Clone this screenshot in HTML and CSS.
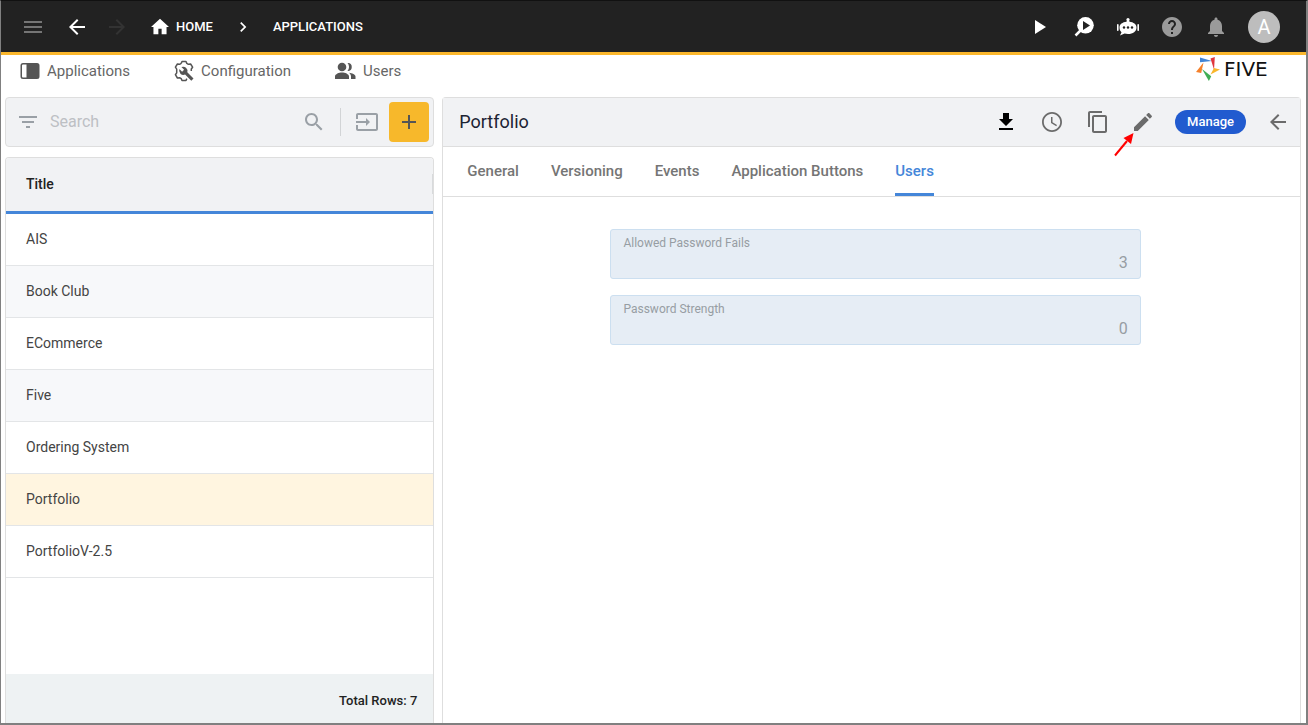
FILE: index.html
```html
<!DOCTYPE html>
<html lang="en">
<head>
<meta charset="utf-8">
<title>Five - Applications</title>
<link rel="stylesheet" href="styles.css">
</head>
<body>
<div class="app">
  <header class="topbar">
    <button class="icon-btn muted" aria-label="Menu"><svg width="24" height="24" viewBox="0 0 24 24"><path d="M3 18h18v-2H3v2zm0-5h18v-2H3v2zm0-7v2h18V6H3z"/></svg></button>
    <button class="icon-btn" aria-label="Back"><svg width="24" height="24" viewBox="0 0 24 24"><path d="M20 11H7.830l5.590-5.590L12 4l-8 8 8 8 1.410-1.410L7.830 13H20v-2z"/></svg></button>
    <button class="icon-btn narrow dim" aria-label="Forward"><svg width="24" height="24" viewBox="0 0 24 24"><path d="M12 4l-1.410 1.410L16.170 11H4v2h12.170l-5.580 5.590L12 20l8-8z"/></svg></button>
    <nav class="crumbs" aria-label="Breadcrumb">
      <a class="crumb" href="#"><svg width="18" height="18" viewBox="1 2 22 20"><path d="M10 21v-7h4v7h6v-9h3L12 2 1 12h3v9z"/></svg>HOME</a>
      <svg class="sep" width="20" height="20" viewBox="0 0 24 24"><path d="M10 6L8.590 7.410 13.170 12l-4.580 4.590L10 18l6-6z"/></svg>
      <a class="crumb" href="#">APPLICATIONS</a>
    </nav>
    <div class="top-actions">
      <button class="icon-btn" aria-label="Run"><svg width="24" height="24" viewBox="0 0 24 24"><path d="M7 5v14l11-7z"/></svg></button>
      <button class="icon-btn" aria-label="Inspect"><svg width="24" height="24" viewBox="0 0 24 24"><circle cx="13.500" cy="10.300" r="8.300"/><path d="M8.500 15.500l-5 5" stroke="#fff" stroke-width="2.500"/><path d="M11 6v9l7-4.500z" fill="#222"/></svg></button>
      <button class="icon-btn" aria-label="Assistant"><svg width="24" height="24" viewBox="0 0 24 24"><circle cx="12" cy="4.500" r="1.600"/><path d="M11.300 4h1.400l.800 2.700c4 .400 7 2.500 7 5.800 0 4-3.500 6.500-8.500 6.500-1.300 0-2.400-.100-3.400-.400L4 20.500l1.500-3.300C4.200 16 3.500 14.500 3.500 12.500c0-3.300 3-5.400 7-5.800z"/><rect x="1" y="9" width="1.600" height="7" rx=".800"/><rect x="21.400" y="9" width="1.600" height="7" rx=".800"/><circle cx="8" cy="12.500" r="1.200" fill="#222"/><circle cx="12" cy="12.500" r="1.200" fill="#222"/><circle cx="16" cy="12.500" r="1.200" fill="#222"/></svg></button>
      <button class="icon-btn gray" aria-label="Help"><svg width="24" height="24" viewBox="0 0 24 24"><path d="M12 2C6.480 2 2 6.480 2 12s4.480 10 10 10 10-4.480 10-10S17.520 2 12 2zm1 17h-2v-2h2v2zm2.070-7.750l-.900.920C13.450 12.900 13 13.500 13 15h-2v-.500c0-1.100.450-2.100 1.170-2.830l1.240-1.260c.370-.360.590-.860.590-1.410 0-1.100-.900-2-2-2s-2 .900-2 2H8c0-2.210 1.790-4 4-4s4 1.790 4 4c0 .880-.360 1.680-.930 2.250z"/></svg></button>
      <button class="icon-btn gray" aria-label="Notifications"><svg width="24" height="24" viewBox="0 0 24 24"><path d="M12 22c1.100 0 2-.900 2-2h-4c0 1.100.890 2 2 2zm6-6v-5c0-3.070-1.640-5.640-4.500-6.320V4c0-.830-.670-1.500-1.500-1.500s-1.500.670-1.500 1.500v.680C7.630 5.360 6 7.920 6 11v5l-2 2v1h16v-1l-2-2z"/></svg></button>
      <button class="avatar" aria-label="Account">A</button>
    </div>
  </header>

  <div class="subnav">
    <nav class="links" aria-label="Sections">
      <a href="#"><svg width="20" height="20" viewBox="0 0 20 20"><path fill-rule="evenodd" d="M3 2h14a2.500 2.500 0 0 1 2.500 2.500v11A2.500 2.500 0 0 1 17 18H3A2.500 2.500 0 0 1 .500 15.500v-11A2.500 2.500 0 0 1 3 2zm0 1.500a1 1 0 0 0-1 1v11a1 1 0 0 0 1 1h3.500v-13z"/></svg>Applications</a>
      <a href="#"><svg width="20" height="22" viewBox="1 0 20 22"><path fill="none" stroke="#555" stroke-width="1.500" stroke-linejoin="round" d="M8.200 3.400L9 1.500h4l.800 1.900 1.600.900 2.200-.300 2 3.200-1.300 1.800v1.900M8.200 3.400l-1.600.900-2.200-.300-2 3.200L3.700 9.100v3.800l-1.300 1.800 2 3.300 2.200-.300 1.600.900.800 1.900h4l.800-1.900"/><path d="M20.500 18.400l-6.200-6.200a4.300 4.300 0 0 0-5.900-5.100l2.700 2.700-2 2-2.700-2.700a4.300 4.300 0 0 0 5.700 5.500l6.200 6.200z"/></svg>Configuration</a>
      <a href="#"><svg width="21" height="22" viewBox="1 0 21 22"><circle cx="8" cy="7" r="4.300"/><path d="M14 3a4 4 0 1 1-.500 8 6 6 0 0 0 0-8zM1 19v-2.500C1 14 5 12.500 8 12.500s7 1.500 7 4V19zM15 12.700c3 .400 6.500 1.700 6.500 3.800V19H17v-2.500c0-1.600-.800-2.800-2-3.800z"/></svg>Users</a>
    </nav>
    <div class="brand">
      <svg width="24" height="24" viewBox="0 0 24 24"><path fill="#4285d6" d="M4 .500L16 4 4 5.200z"/><path fill="#e0363c" d="M14.500 1.500L18.800 0l-.800 12.500z"/><path fill="#f8b62b" d="M24 12.500L14.500 17.500 18 11z"/><path fill="#3fae55" d="M6 12l9.200 7.300-2.300 4.700z"/><path fill="#f5802a" d="M7.500 5.500L5.200 16 0 15z"/></svg>
      <span>FIVE</span>
    </div>
  </div>

  <main class="workspace">
    <section class="list-col">
      <div class="search">
        <svg width="24" height="24" viewBox="0 0 24 24"><path d="M10 18h4v-2h-4v2zM3 6v2h18V6H3zm3 7h12v-2H6v2z"/></svg>
        <input type="text" placeholder="Search" aria-label="Search">
        <button class="plain" aria-label="Find"><svg width="24" height="24" viewBox="0 0 24 24"><path d="M15.500 14h-.790l-.280-.270C15.410 12.590 16 11.110 16 9.500 16 5.910 13.090 3 9.500 3S3 5.910 3 9.500 5.910 16 9.500 16c1.610 0 3.090-.590 4.230-1.570l.270.280v.790l5 4.990L20.490 19l-4.990-5zm-6 0C7.010 14 5 11.990 5 9.500S7.010 5 9.500 5 14 7.010 14 9.500 11.990 14 9.500 14z"/></svg></button>
        <button class="plain import" aria-label="Import"><svg width="24" height="24" viewBox="0 0 24 24"><path d="M21 3.010H3c-1.100 0-2 .900-2 2V9h2V4.990h18v14.030H3V15H1v4.010c0 1.100.900 1.980 2 1.980h18c1.100 0 2-.880 2-1.980v-14c0-1.110-.900-2-2-2zM11 16l4-4-4-4v3H1v2h10v3z"/></svg></button>
        <button class="add" aria-label="Add"><svg width="24" height="24" viewBox="0 0 24 24"><path d="M19 13h-6v6h-2v-6H5v-2h6V5h2v6h6v2z"/></svg></button>
      </div>
      <div class="list">
        <table>
          <thead><tr><th scope="col"><span>Title</span></th></tr></thead>
          <tbody>
            <tr><td>AIS</td></tr>
            <tr><td>Book Club</td></tr>
            <tr><td>ECommerce</td></tr>
            <tr><td>Five</td></tr>
            <tr><td>Ordering System</td></tr>
            <tr class="selected"><td>Portfolio</td></tr>
            <tr><td>PortfolioV-2.5</td></tr>
          </tbody>
        </table>
        <footer class="total">Total Rows: 7</footer>
      </div>
    </section>

    <section class="detail">
      <div class="detail-head">
        <h1>Portfolio</h1>
        <button class="icon-btn wide black" aria-label="Download"><svg width="24" height="24" viewBox="0 0 24 24"><path d="M19 9h-4V3H9v6H5l7 7 7-7zM5 18v2h14v-2H5z"/></svg></button>
        <button class="icon-btn wide" aria-label="History"><svg width="24" height="24" viewBox="0 0 24 24"><path d="M11.990 2C6.470 2 2 6.480 2 12s4.470 10 9.990 10C17.520 22 22 17.520 22 12S17.520 2 11.990 2zM12 20.200c-4.500 0-8.200-3.700-8.200-8.200S7.500 3.800 12 3.800s8.200 3.700 8.200 8.200-3.700 8.200-8.200 8.200zM12.500 7H11v6l5.250 3.150.750-1.230-4.500-2.670z"/></svg></button>
        <button class="icon-btn wide" aria-label="Copy"><svg width="24" height="24" viewBox="0 0 24 24"><path d="M16 1H4c-1.100 0-2 .900-2 2v14h2V3h12V1zm3 4H8c-1.100 0-2 .900-2 2v14c0 1.100.900 2 2 2h11c1.100 0 2-.900 2-2V7c0-1.100-.900-2-2-2zm0 16H8V7h11v14z"/></svg></button>
        <button class="icon-btn edit" aria-label="Edit"><svg width="24" height="24" viewBox="0 0 24 24"><path d="M3 17.250V21h3.750L17.810 9.940l-3.750-3.750L3 17.250zM20.710 7.040c.390-.390.390-1.020 0-1.410l-2.340-2.340c-.390-.390-1.020-.390-1.410 0l-1.830 1.830 3.750 3.750 1.830-1.830z"/></svg>
          <svg class="pointer" width="22" height="26" viewBox="0 0 22 26"><path d="M2 24.500L14 10" stroke="#f00" stroke-width="2"/><path d="M20.500 2l-2.500 11-7.500-6z" fill="#f00"/></svg></button>
        <button class="manage">Manage</button>
        <button class="icon-btn" aria-label="Close"><svg width="24" height="24" viewBox="0 0 24 24"><path d="M20 11H7.830l5.590-5.590L12 4l-8 8 8 8 1.410-1.410L7.830 13H20v-2z"/></svg></button>
      </div>
      <div class="tabs" role="tablist">
        <button role="tab">General</button>
        <button role="tab">Versioning</button>
        <button role="tab">Events</button>
        <button role="tab">Application Buttons</button>
        <button role="tab" class="active" aria-selected="true">Users</button>
      </div>
      <form class="fields">
        <div class="field"><label for="fails">Allowed Password Fails</label><input id="fails" type="text" value="3" readonly></div>
        <div class="field"><label for="strength">Password Strength</label><input id="strength" type="text" value="0" readonly></div>
      </form>
    </section>
  </main>
</div>
</body>
</html>
```
FILE: styles.css
```css
* { box-sizing: border-box; }
body { margin: 0; background: #fff; color: #333; font: 14px/20px Roboto, "Liberation Sans", sans-serif; }
button, input { font: inherit; color: inherit; border: 0; padding: 0; margin: 0; background: none; }
button { cursor: pointer; }
a { color: inherit; text-decoration: none; }
svg { display: block; flex: none; fill: currentColor; }

.app { display: flex; flex-direction: column; min-height: 100vh; border: 1px solid #808080; border-width: 1px 2px 2px 1px; border-top-color: #111; }

.topbar { display: flex; align-items: center; height: 54px; padding: 1px 26px 0 10px; background: #222; border-bottom: 3px solid #fbb72c; color: #fff; }
.icon-btn { display: flex; align-items: center; justify-content: center; width: 44px; height: 44px; }
.icon-btn.narrow { width: 36px; }
.muted { color: #757575; }
.dim { color: #333; }
.gray { color: #9a9a9a; }
.crumbs { display: flex; align-items: center; margin-left: 16px; font-size: 13px; font-weight: 500; }
.crumb { display: flex; align-items: center; gap: 7px; }
.sep { margin: 0 20px; }
.top-actions { display: flex; align-items: center; margin-left: auto; }
.avatar { width: 32px; height: 32px; margin-left: 10px; border-radius: 50%; background: #bdbdbd; color: #fff; font-size: 20px; }

.subnav { display: flex; align-items: flex-start; justify-content: space-between; height: 42px; padding: 2px 22px 0 19px; color: #555; }
.links { display: flex; gap: 44px; padding-top: 3px; font-size: 15px; color: #666; }
.links a { display: flex; align-items: center; gap: 7px; }
.links svg { color: #555; }
.brand { display: flex; align-items: center; gap: 4px; color: #111; font: 20px/24px "DejaVu Sans", sans-serif; }
.brand span { min-width: 60px; }

.workspace { display: grid; grid-template-columns: minmax(0, 1fr) minmax(0, 2fr); flex: 1; gap: 8px; padding: 0 5px 0 4px; }
.list-col { display: flex; flex-direction: column; gap: 10px; }
.search { display: flex; align-items: center; height: 50px; padding: 0 4px 0 10px; border: 1px solid #dedede; border-radius: 4px; background: #f1f2f4; color: #9aa0a6; }
.search input { flex: 1; min-width: 0; margin-left: 10px; font-size: 16px; outline: 0; }
.search input::placeholder { color: #bdc0c4; opacity: 1; }
.plain { display: flex; }
.import { margin: 0 10px 0 14px; padding: 2px 0 2px 14px; border-left: 1px solid #d2d4d6; }
.add { display: flex; align-items: center; justify-content: center; width: 40px; height: 40px; border-radius: 4px; background: #f7b82b; color: #555; }

.list { display: flex; flex: 1; flex-direction: column; border: 1px solid #dedede; border-bottom: 0; border-radius: 4px 4px 0 0; overflow: hidden; }
table { width: 100%; border-collapse: separate; border-spacing: 0; }
th { height: 56px; padding: 0 0 2px 20px; background: #f1f2f4; border-bottom: 3px solid #4486d9; color: #222; font-weight: 500; text-align: left; }
th span { display: block; border-right: 1px solid #d8dadc; }
td { height: 52px; padding: 0 20px 2px; border-bottom: 1px solid #e3e5e7; color: #444; }
tr:nth-child(even) td { background: #f7f8fa; }
tr.selected td { background: #fff5e0; }
.total { margin-top: auto; padding: 17px 16px 12px; background: #eef2f3; color: #222; font-size: 13px; font-weight: 500; text-align: right; }

.detail { display: flex; flex-direction: column; border: 1px solid #dedede; border-bottom: 0; border-radius: 4px 4px 0 0; }
.detail-head { display: flex; align-items: center; height: 49px; padding-left: 16px; background: #f1f2f4; border-bottom: 1px solid #dedede; color: #6b6b6b; }
h1 { flex: 1; margin: 0; color: #1c2333; font-size: 18px; font-weight: 400; }
.wide { width: 46px; }
.black { color: #000; }
.edit { position: relative; }
.pointer { position: absolute; left: -8px; top: 31px; }
.manage { height: 24px; margin: 0 10px; padding: 0 12px; border-radius: 12px; background: #215bcf; color: #fff; font-size: 13px; font-weight: 500; }
.tabs { display: flex; gap: 32px; height: 50px; padding: 0 24px; border-bottom: 1px solid #dedede; color: #757575; font-size: 15px; font-weight: 500; }
.tabs button { padding-bottom: 2px; border-top: 3px solid transparent; border-bottom: 3px solid transparent; }
.tabs .active { border-bottom-color: #4486d9; color: #4486d9; }
.fields { display: flex; flex-direction: column; align-items: center; gap: 16px; padding: 32px 0 0 8px; }
.field { display: flex; flex-direction: column; width: 62.5%; padding: 4px 12px 5px; border: 1px solid #ccdff0; border-radius: 3px; background: #e6edf5; color: #979da3; }
.field label { font-size: 12px; line-height: 18px; }
.field input { width: 100%; height: 21px; font-size: 16px; text-align: right; outline: 0; }
```
